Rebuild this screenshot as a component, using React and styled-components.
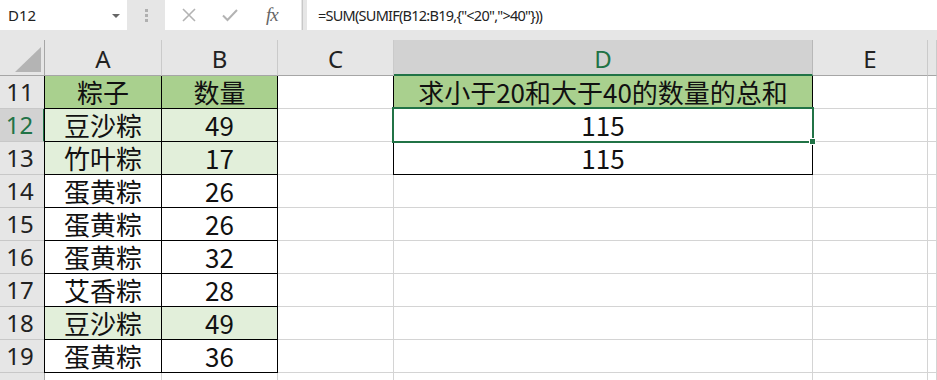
import React from 'react';
import styled, { createGlobalStyle } from 'styled-components';

const GREEN = '#217346';
const GRID = '#d4d4d4';

const GlobalStyle = createGlobalStyle`
  html, body {
    margin: 0;
    padding: 0;
    background: #e6e6e6;
  }
  body {
    font-family: "Noto Sans CJK SC", "Noto Sans", sans-serif;
  }
`;

const Page = styled.div`
  width: 937px;
  height: 380px;
  overflow: hidden;
  background: #e6e6e6;
  display: flex;
  flex-direction: column;
`;

const Toolbar = styled.div`
  display: flex;
  flex-shrink: 0;
  height: 30px;
  margin-bottom: 10px;
`;

const NameBox = styled.div`
  width: 127px;
  background: #fff;
  box-sizing: border-box;
  padding: 0 7px 0 8px;
  display: flex;
  align-items: center;
  justify-content: space-between;
  font: 15px "Noto Sans", sans-serif;
  color: #222;
`;

const DropArrow = styled.span`
  width: 0;
  height: 0;
  border-left: 4px solid transparent;
  border-right: 4px solid transparent;
  border-top: 4px solid #666;
  margin-top: 2px;
`;

const Grip = styled.div`
  width: 38px;
  display: flex;
  flex-direction: column;
  align-items: center;
  justify-content: center;
  gap: 2px;

  span {
    width: 3px;
    height: 3px;
    background: #b0b0b0;
  }
`;

const Buttons = styled.div`
  width: 136px;
  background: #fff;
  display: flex;
  align-items: center;
  padding-left: 16px;
  box-sizing: border-box;
`;

const IconSlot = styled.div`
  width: 45px;
  display: flex;
  align-items: center;
  justify-content: flex-start;
`;

const Fx = styled.span`
  font: italic 19px "Liberation Serif", serif;
  color: #666;
  margin-left: 5px;
  letter-spacing: -1px;
`;

const Divider = styled.div`
  width: 4px;
  border-left: 1px solid #c8c8c8;
  margin-left: 1px;
`;

const Formula = styled.div`
  flex: 1;
  background: #fff;
  display: flex;
  align-items: center;
  padding-left: 11px;
  font: 14.5px "Noto Sans", sans-serif;
  letter-spacing: -0.75px;
  color: #222;
  white-space: pre;
`;

const Sheet = styled.div`
  flex-shrink: 0;
  display: grid;
  grid-template-columns: 45px 117px 116px 116px 419px 115px 1fr;
  grid-template-rows: 36px;
  grid-auto-rows: 33px;
  background: #fff;
`;

const Corner = styled.div`
  background: #e6e6e6;
  border-right: 1px solid #a6a6a6;
  border-bottom: 1px solid #a6a6a6;
  display: flex;
  align-items: flex-end;
  justify-content: flex-end;
  padding: 0 3px 3px 0;

  &::after {
    content: '';
    width: 0;
    height: 0;
    border-left: 26px solid transparent;
    border-bottom: 25px solid #b4b4b4;
  }
`;

const ColHeader = styled.div`
  background: ${(p) => (p.$active ? '#d2d2d2' : '#e6e6e6')};
  color: ${(p) => (p.$active ? GREEN : '#222')};
  border-right: 1px solid ${(p) => (p.$active ? '#b8b8b8' : '#cacaca')};
  border-bottom: ${(p) => (p.$active ? `2px solid ${GREEN}` : '1px solid #a6a6a6')};
  display: flex;
  align-items: center;
  justify-content: center;
  font: 24px "Noto Sans", sans-serif;
  padding-top: 2px;
  box-sizing: border-box;
`;

const RowHeader = styled.div`
  background: ${(p) => (p.$active ? '#d2d2d2' : '#e6e6e6')};
  color: ${(p) => (p.$active ? GREEN : '#222')};
  border-right: ${(p) => (p.$active ? `2px solid ${GREEN}` : '1px solid #a6a6a6')};
  border-bottom: 1px solid #c8c8c8;
  display: flex;
  align-items: center;
  justify-content: center;
  padding-right: 4px;
  font: 24px "Noto Sans", sans-serif;
  line-height: 1;
  box-sizing: border-box;
`;

const fills = {
  head: '#a9d08e',
  light: '#e2efda',
  none: '#fff',
};

const Cell = styled.div`
  position: relative;
  background: ${(p) => fills[p.$fill || 'none']};
  border-right: 1px solid ${(p) => (p.$boxed ? '#000' : GRID)};
  border-bottom: 1px solid ${(p) => (p.$boxed ? '#000' : GRID)};
  box-shadow: ${(p) => (p.$boxed ? '-1px 0 0 0 #000' : 'none')};
  display: flex;
  align-items: center;
  justify-content: center;
  font-size: 26px;
  line-height: 1;
  color: #111;
  white-space: nowrap;
  box-sizing: border-box;
`;

const Selection = styled.div`
  position: absolute;
  top: -2px;
  left: -2px;
  right: -2px;
  bottom: -2px;
  border: 2px solid ${GREEN};
  z-index: 2;
  pointer-events: none;

  &::after {
    content: '';
    position: absolute;
    right: -4px;
    bottom: -4px;
    width: 5px;
    height: 5px;
    background: ${GREEN};
    border: 1px solid #fff;
  }
`;

const CloseIcon = () => (
  <svg width="16" height="16" viewBox="0 0 16 16">
    <path d="M2 2 L14 14 M14 2 L2 14" stroke="#b3b3b3" strokeWidth="1.6" fill="none" />
  </svg>
);

const CheckIcon = () => (
  <svg width="18" height="16" viewBox="0 0 18 16">
    <path d="M2 8.5 L6.5 13 L16 3" stroke="#b3b3b3" strokeWidth="2" fill="none" />
  </svg>
);

const columns = ['A', 'B', 'C', 'D', 'E', ''];

const rows = [
  { n: 11, a: '粽子', b: '数量', fill: 'head', d: '求小于20和大于40的数量的总和', dFill: 'head' },
  { n: 12, a: '豆沙粽', b: '49', fill: 'light', d: '115', selected: true },
  { n: 13, a: '竹叶粽', b: '17', fill: 'light', d: '115' },
  { n: 14, a: '蛋黄粽', b: '26' },
  { n: 15, a: '蛋黄粽', b: '26' },
  { n: 16, a: '蛋黄粽', b: '32' },
  { n: 17, a: '艾香粽', b: '28' },
  { n: 18, a: '豆沙粽', b: '49', fill: 'light' },
  { n: 19, a: '蛋黄粽', b: '36' },
  { n: 20, empty: true },
];

export default function App() {
  return (
    <Page>
      <GlobalStyle />
      <Toolbar>
        <NameBox>
          D12
          <DropArrow />
        </NameBox>
        <Grip>
          <span />
          <span />
          <span />
        </Grip>
        <Buttons>
          <IconSlot>
            <CloseIcon />
          </IconSlot>
          <IconSlot>
            <CheckIcon />
          </IconSlot>
          <IconSlot>
            <Fx>fx</Fx>
          </IconSlot>
        </Buttons>
        <Divider />
        <Formula>{'=SUM(SUMIF(B12:B19,{"<20",">40"}))'}</Formula>
      </Toolbar>

      <Sheet>
        <Corner />
        {columns.map((c, i) => (
          <ColHeader key={i} $active={c === 'D'}>
            {c}
          </ColHeader>
        ))}

        {rows.map((r) => (
          <React.Fragment key={r.n}>
            <RowHeader $active={r.selected}>{r.empty ? '' : r.n}</RowHeader>
            <Cell $fill={r.fill} $boxed={!r.empty}>
              {r.a}
            </Cell>
            <Cell $fill={r.fill} $boxed={!r.empty}>
              {r.b}
            </Cell>
            <Cell />
            <Cell $fill={r.dFill} $boxed={!!r.d}>
              {r.d}
              {r.selected && <Selection />}
            </Cell>
            <Cell />
            <Cell />
          </React.Fragment>
        ))}
      </Sheet>
    </Page>
  );
}
